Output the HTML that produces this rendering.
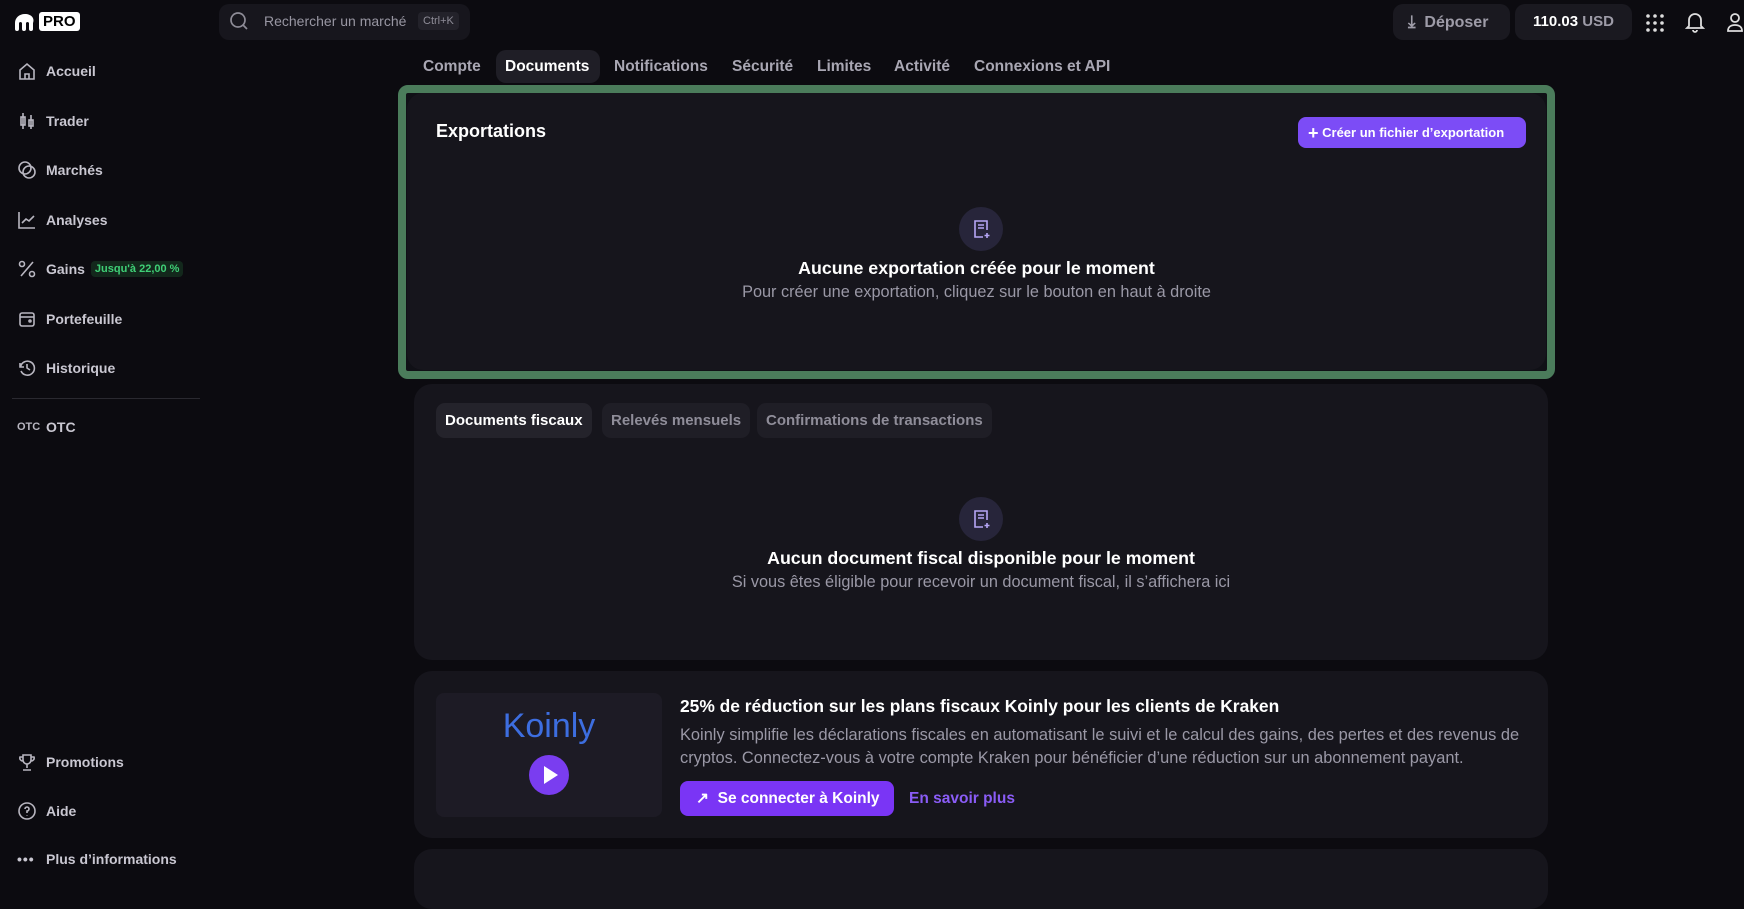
<!DOCTYPE html>
<html><head><meta charset="utf-8"><style>
*{box-sizing:border-box;margin:0;padding:0}
body{width:1744px;height:873px;background:#0c0b10;font-family:"Liberation Sans",sans-serif;color:#fff;position:relative;overflow:hidden}
.a{position:absolute}
.nav{position:absolute;left:17px;display:flex;align-items:center;font-size:14px;font-weight:bold;color:#c9c7d1}
.nav svg{width:20px;height:20px;margin-right:9px;stroke:#b8b6c0;fill:none;stroke-width:1.6}
.card{position:absolute;background:#16151c;border-radius:18px}
.tab{position:absolute;top:50px;height:33px;line-height:33px;font-size:15.5px;font-weight:bold;color:#a9a7b3;padding:0 9px;border-radius:10px}
.st{position:absolute;height:35px;line-height:35px;font-size:15px;font-weight:bold;color:#8f8d99;padding:0 9px;border-radius:9px;background:#1f1e26}
.ic{position:absolute;width:44px;height:44px;border-radius:50%;background:#27253a;display:flex;align-items:center;justify-content:center}
.h{position:absolute;width:100%;text-align:center;font-size:17.8px;font-weight:bold}
.s{position:absolute;width:100%;text-align:center;font-size:16.3px;color:#9a98a6}
</style></head><body>
<div class="a" style="left:14px;top:12px;display:flex;align-items:center">
<svg width="22" height="18" viewBox="0 0 22 18"><path d="M11 1C5 1 1 5 1 10v6a2 2 0 0 0 4 0v-6a1.6 1.6 0 0 1 3 0v6a2 2 0 0 0 4 0v-6a1.6 1.6 0 0 1 3 0v6a2 2 0 0 0 4 0v-6C21 5 17 1 11 1z" fill="#fff"/></svg>
<div style="margin-left:3px;background:#fff;color:#000;font-weight:bold;font-size:15px;padding:1px 4px;border-radius:3px;line-height:17px">PRO</div></div>
<div class="a" style="left:219px;top:4px;width:251px;height:36px;background:#17161d;border-radius:10px"></div>
<svg class="a" style="left:229px;top:11px" width="20" height="20" viewBox="0 0 20 20" fill="none" stroke="#8e8c97" stroke-width="1.7"><circle cx="9" cy="9" r="7"/><path d="M14 14l4 4"/></svg>
<div class="a" style="left:264px;top:13px;font-size:14px;color:#9896a2">Rechercher un marché</div>
<div class="a" style="left:418px;top:12px;font-size:11px;color:#8e8c97;background:#23222a;padding:3px 5px;border-radius:4px">Ctrl+K</div>
<div class="a" style="left:1393px;top:4px;width:117px;height:36px;background:#1a1920;border-radius:10px;font-size:16px;color:#9e9ca8;font-weight:bold;line-height:36px;padding-left:15px">
<span style="font-size:17px">⤓</span>&nbsp; Déposer</div>
<div class="a" style="left:1515px;top:4px;width:117px;height:36px;background:#1a1920;border-radius:10px;font-size:15px;line-height:36px;text-align:center;font-weight:bold">110.03 <span style="color:#9e9ca8">USD</span></div>
<svg class="a" style="left:1645px;top:13px" width="20" height="20" viewBox="0 0 20 20" fill="#ddd"><circle cx="3" cy="3" r="1.8"/><circle cx="10" cy="3" r="1.8"/><circle cx="17" cy="3" r="1.8"/><circle cx="3" cy="10" r="1.8"/><circle cx="10" cy="10" r="1.8"/><circle cx="17" cy="10" r="1.8"/><circle cx="3" cy="17" r="1.8"/><circle cx="10" cy="17" r="1.8"/><circle cx="17" cy="17" r="1.8"/></svg>
<svg class="a" style="left:1685px;top:11px" width="20" height="22" viewBox="0 0 20 22" fill="none" stroke="#ddd" stroke-width="1.8"><path d="M4 15V9a6 6 0 0 1 12 0v6l2 2H2z"/><path d="M8 19a2 2 0 0 0 4 0"/></svg>
<svg class="a" style="left:1726px;top:11px" width="18" height="22" viewBox="0 0 18 22" fill="none" stroke="#ddd" stroke-width="1.8"><circle cx="9" cy="7" r="4"/><path d="M2 20c0-4 3-6 7-6s7 2 7 6z"/></svg>
<div class="nav" style="top:61px"><svg viewBox="0 0 20 20"><path d="M3 9l7-6 7 6v9H3z"/><path d="M8 18v-5h4v5"/></svg>Accueil</div>
<div class="nav" style="top:111px"><svg viewBox="0 0 20 20"><path d="M6 2v16M14 4v14"/><rect x="4" y="6" width="4" height="8"/><rect x="12" y="9" width="4" height="6"/></svg>Trader</div>
<div class="nav" style="top:160px"><svg viewBox="0 0 20 20"><circle cx="8" cy="8" r="6"/><circle cx="12" cy="12" r="6"/></svg>Marchés</div>
<div class="nav" style="top:210px"><svg viewBox="0 0 20 20"><path d="M2 2v16h16"/><path d="M5 13l4-4 3 2 5-5"/></svg>Analyses</div>
<div class="nav" style="top:259px"><svg viewBox="0 0 20 20"><path d="M16 3L4 17"/><circle cx="5" cy="5" r="2.5"/><circle cx="15" cy="15" r="2.5"/></svg>Gains <span style="margin-left:6px;background:#13281c;color:#3fcf76;font-size:11px;padding:2px 4px;border-radius:4px">Jusqu'à 22,00 %</span></div>
<div class="nav" style="top:309px"><svg viewBox="0 0 20 20"><rect x="3" y="4" width="14" height="13" rx="2"/><path d="M3 8h14"/><circle cx="13" cy="12" r="1"/></svg>Portefeuille</div>
<div class="nav" style="top:358px"><svg viewBox="0 0 20 20"><path d="M3 5v4h4"/><path d="M3.5 9A7 7 0 1 1 4 13"/><path d="M10 6v4l3 2"/></svg>Historique</div>
<div class="a" style="left:12px;top:398px;width:188px;height:1px;background:#2a2930"></div>
<div class="nav" style="top:419px"><span style="font-size:11px;width:29px;color:#b8b6c0">OTC</span>OTC</div>
<div class="nav" style="top:752px"><svg viewBox="0 0 20 20"><path d="M6 3h8v5a4 4 0 0 1-8 0z"/><path d="M6 5H3a3 3 0 0 0 3 4M14 5h3a3 3 0 0 1-3 4M10 12v4M6 18h8"/></svg>Promotions</div>
<div class="nav" style="top:801px"><svg viewBox="0 0 20 20"><circle cx="10" cy="10" r="8"/><path d="M8 8a2 2 0 1 1 2 2v2M10 14.5v.5"/></svg>Aide</div>
<div class="nav" style="top:851px"><span style="width:29px;letter-spacing:1px">•••</span>Plus d’informations</div>
<div class="tab" style="left:414px">Compte</div>
<div class="tab" style="left:496px;width:104px;background:#1f1e26;color:#fff">Documents</div>
<div class="tab" style="left:605px">Notifications</div>
<div class="tab" style="left:723px">Sécurité</div>
<div class="tab" style="left:808px">Limites</div>
<div class="tab" style="left:885px">Activité</div>
<div class="tab" style="left:965px">Connexions et API</div>
<div class="a" style="left:398px;top:85px;width:1157px;height:294px;border:8px solid #4b7c5b;border-radius:10px;background:#101016"></div>
<div class="card" style="left:407px;top:93px;width:1139px;height:277px;border-radius:16px">
<div class="a" style="left:29px;top:28px;font-size:18px;font-weight:bold">Exportations</div>
<div class="a" style="left:891px;top:24px;width:228px;height:31px;background:#7c4cf6;border-radius:8px;font-size:13px;font-weight:bold;line-height:31px;padding-left:10px"><span style="font-size:18px;vertical-align:-2px">+</span>&nbsp;Créer un fichier d’exportation</div>
<div class="ic" style="left:552px;top:114px"><svg width="22" height="22" viewBox="0 0 22 22" fill="none" stroke="#b6a6f5" stroke-width="1.6"><path d="M13 19H5V3h12v9"/><path d="M8 7h6M8 10h6M17 15v5M14.5 17.5h5"/></svg></div>
<div class="h" style="top:165px">Aucune exportation créée pour le moment</div>
<div class="s" style="top:190px">Pour créer une exportation, cliquez sur le bouton en haut à droite</div>
</div>
<div class="card" style="left:414px;top:384px;width:1134px;height:276px">
<div class="st" style="left:22px;top:19px;color:#fff;background:#24232b">Documents fiscaux</div>
<div class="st" style="left:188px;top:19px">Relevés mensuels</div>
<div class="st" style="left:343px;top:19px">Confirmations de transactions</div>
<div class="ic" style="left:545px;top:113px"><svg width="22" height="22" viewBox="0 0 22 22" fill="none" stroke="#b6a6f5" stroke-width="1.6"><path d="M13 19H5V3h12v9"/><path d="M8 7h6M8 10h6M17 15v5M14.5 17.5h5"/></svg></div>
<div class="h" style="top:164px">Aucun document fiscal disponible pour le moment</div>
<div class="s" style="top:189px">Si vous êtes éligible pour recevoir un document fiscal, il s’affichera ici</div>
</div>
<div class="card" style="left:414px;top:671px;width:1134px;height:167px">
<div class="a" style="left:22px;top:22px;width:226px;height:124px;background:#1d1b25;border-radius:8px">
<div class="a" style="left:0;width:100%;top:14px;text-align:center;font-size:34px;color:#3d6ee0">Koinly</div>
<div class="a" style="left:93px;top:62px;width:40px;height:40px;border-radius:50%;background:#7a3df0"><div class="a" style="left:15px;top:11px;border-left:14px solid #fff;border-top:9px solid transparent;border-bottom:9px solid transparent"></div></div>
</div>
<div class="a" style="left:266px;top:25px;font-size:17.4px;font-weight:bold">25% de réduction sur les plans fiscaux Koinly pour les clients de Kraken</div>
<div class="a" style="left:266px;top:53px;width:850px;font-size:16.4px;line-height:23px;color:#9a98a6">Koinly simplifie les déclarations fiscales en automatisant le suivi et le calcul des gains, des pertes et des revenus de cryptos. Connectez-vous à votre compte Kraken pour bénéficier d’une réduction sur un abonnement payant.</div>
<div class="a" style="left:266px;top:110px;width:214px;height:35px;background:#7a35f5;border-radius:8px;font-size:15.5px;font-weight:bold;line-height:35px;padding-left:16px">↗&nbsp; Se connecter à Koinly</div>
<div class="a" style="left:495px;top:119px;font-size:15.5px;font-weight:bold;color:#8a5cf6">En savoir plus</div>
</div>
<div class="card" style="left:414px;top:849px;width:1134px;height:60px"></div>
</body></html>
